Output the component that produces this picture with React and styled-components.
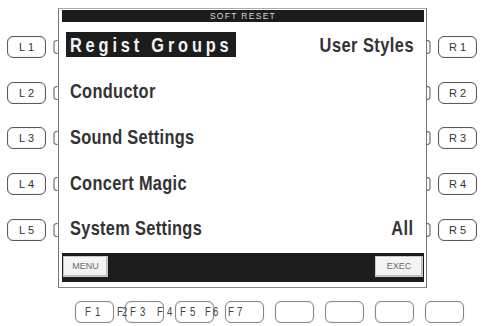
import styled, { createGlobalStyle } from "styled-components";

const GlobalStyle = createGlobalStyle`
  html, body {
    margin: 0;
    padding: 0;
    background: #fff;
  }
  body {
    width: 482px;
    height: 326px;
    overflow: hidden;
    font-family: "Liberation Sans", Arial, sans-serif;
  }
`;

const rows = [
  { key: "1", item: "Regist Groups", active: true, right: "User Styles" },
  { key: "2", item: "Conductor" },
  { key: "3", item: "Sound Settings" },
  { key: "4", item: "Concert Magic" },
  { key: "5", item: "System Settings", right: "All" },
];

// label x and the distance from "F" to its digit, as printed under the keys
const fLabels = [
  { t: "F", n: "1", x: 85, gap: 10 },
  { t: "F", n: "2", x: 117, gap: 5 },
  { t: "F", n: "3", x: 130, gap: 10 },
  { t: "F", n: "4", x: 157, gap: 10 },
  { t: "F", n: "5", x: 180, gap: 10 },
  { t: "F", n: "6", x: 205, gap: 8 },
  { t: "F", n: "7", x: 228, gap: 9 },
];

function App() {
  return (
    <>
      <GlobalStyle />
      <Panel>
        <Top>
          <SideCol $w={58}>
            {rows.map((r) => (
              <SideRow key={r.key}>
                <KeyButton>L{r.key}</KeyButton>
                <Spacer />
                <Bracket viewBox="0 0 5 14">
                  <path d="M4.5 0.5 Q1 0.5 1 3 V11 Q1 13.5 4.5 13.5" />
                </Bracket>
              </SideRow>
            ))}
          </SideCol>

          <Screen>
            <TitleBar>SOFT RESET</TitleBar>
            <Rows>
              {rows.map((r) => (
                <Row key={r.key}>
                  <Item $active={r.active}>{r.item}</Item>
                  {r.right && <RightItem>{r.right}</RightItem>}
                </Row>
              ))}
            </Rows>
            <BottomBar>
              <BarButton $w={45}>MENU</BarButton>
              <BarButton $w={48}>EXEC</BarButton>
            </BottomBar>
          </Screen>

          <SideCol $w={55}>
            {rows.map((r) => (
              <SideRow key={r.key}>
                <Bracket viewBox="0 0 5 14" $right>
                  <path d="M0.5 0.5 Q4 0.5 4 3 V11 Q4 13.5 0.5 13.5" />
                </Bracket>
                <KeyButton>R{r.key}</KeyButton>
              </SideRow>
            ))}
          </SideCol>
        </Top>

        <FRow>
          {Array.from({ length: 8 }).map((_, i) => (
            <FBox key={i} />
          ))}
          {fLabels.map((l) => (
            <FLabel key={l.n} $x={l.x}>
              {l.t}
              <FDigit $gap={l.gap}>{l.n}</FDigit>
            </FLabel>
          ))}
        </FRow>
      </Panel>
    </>
  );
}

const Panel = styled.div`
  width: 482px;
  height: 326px;
  display: flex;
  flex-direction: column;
`;

const Top = styled.div`
  display: flex;
  padding-top: 8px;
`;

const SideCol = styled.div`
  width: ${({ $w }) => $w}px;
  flex: none;
  display: flex;
  flex-direction: column;
  padding-top: 28px;
  gap: 23.7px;
`;

const SideRow = styled.div`
  display: flex;
  align-items: center;
  height: 22px;
`;

const KeyButton = styled.div`
  width: 39px;
  height: 22px;
  box-sizing: border-box;
  margin-left: 7px;
  border: 1.5px solid #5a5a5a;
  border-radius: 6px;
  display: flex;
  align-items: center;
  justify-content: center;
  font-size: 11px;
  letter-spacing: 3px;
  text-indent: 3px;
  color: #333;
  box-shadow: inset 0 0 1px #999;
`;

const Spacer = styled.div`
  flex: 1;
`;

const Bracket = styled.svg`
  width: 5px;
  height: 14px;
  flex: none;
  fill: none;
  stroke: #666;
  stroke-width: 1.1;
  margin-left: ${({ $right }) => ($right ? "-1px" : "0")};
`;

const Screen = styled.div`
  width: 369px;
  height: 280px;
  box-sizing: border-box;
  flex: none;
  border: 1px solid #777;
  border-top-color: #aaa;
  border-bottom-color: #888;
  padding: 1px 2px 0 3px;
  display: flex;
  flex-direction: column;
`;

const TitleBar = styled.div`
  height: 12px;
  background: #1c1c1c;
  color: #d8d8d8;
  font-size: 8.5px;
  line-height: 12px;
  letter-spacing: 1.3px;
  text-align: center;
`;

const Rows = styled.div`
  display: grid;
  grid-template-rows: repeat(5, 45.75px);
`;

const Row = styled.div`
  display: flex;
  align-items: center;
  justify-content: space-between;
  padding: 0 10px 0 4px;
`;

// the panel font is a tall condensed face; squeeze Liberation Sans to match
const Item = styled.div`
  height: 25px;
  line-height: 26px;
  padding: 0 5px 0 5.1px;
  font-weight: bold;
  font-size: 21px;
  letter-spacing: ${({ $active }) => ($active ? "4.9px" : "0.4px")};
  background: ${({ $active }) => ($active ? "#1c1c1c" : "transparent")};
  color: ${({ $active }) => ($active ? "#f2f2f2" : "#333")};
  transform: scaleX(0.78);
  transform-origin: left center;
  white-space: nowrap;
`;

const RightItem = styled.div`
  font-weight: bold;
  font-size: 21px;
  letter-spacing: 0.6px;
  color: #333;
  transform: scaleX(0.78);
  transform-origin: right center;
  white-space: nowrap;
`;

const BottomBar = styled.div`
  margin-top: 2px;
  height: 29px;
  box-sizing: border-box;
  background: #1c1c1c;
  display: flex;
  justify-content: space-between;
  align-items: flex-start;
  padding: 3px 1px 0;
`;

const BarButton = styled.div`
  width: ${({ $w }) => $w}px;
  height: 21px;
  box-sizing: border-box;
  background: #f4f4f4;
  border: 1px solid #c8c8c8;
  box-shadow: inset -1px -1px 0 #bbb;
  display: flex;
  align-items: center;
  justify-content: center;
  font-size: 9px;
  color: #6a6a6a;
`;

const FRow = styled.div`
  position: relative;
  display: flex;
  gap: 11px;
  padding-left: 75px;
  margin-top: 13px;
`;

const FBox = styled.div`
  width: 39px;
  height: 22px;
  box-sizing: border-box;
  border: 1.5px solid #8a8a8a;
  border-radius: 6px;
  box-shadow: inset 0 0 1px #bbb, 0 0 1px #bbb;
`;

const FLabel = styled.span`
  position: absolute;
  top: 0;
  left: ${({ $x }) => $x}px;
  height: 22px;
  line-height: 23px;
  font-size: 12px;
  color: #444;
  white-space: nowrap;
  transform: scaleX(0.8);
  transform-origin: left center;
`;

const FDigit = styled.span`
  margin-left: ${({ $gap }) => ($gap - 5.9) / 0.8}px;
`;

export default App;
